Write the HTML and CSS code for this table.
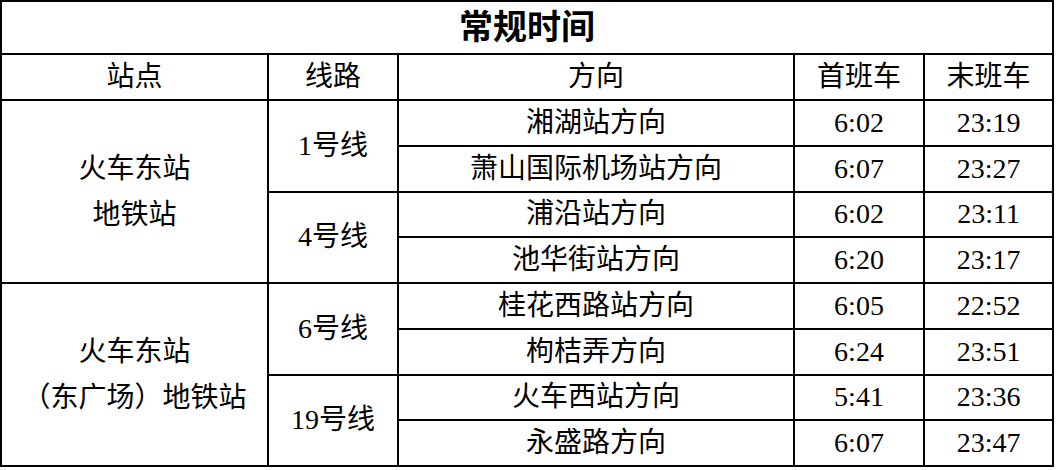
FILE: index.html
```html
<!DOCTYPE html>
<html lang="zh-CN">
<head>
<meta charset="utf-8">
<title>常规时间</title>
<link rel="stylesheet" href="styles.css">
</head>
<body>
<table class="timetable">
  <colgroup>
    <col class="c-station">
    <col class="c-line">
    <col class="c-dir">
    <col class="c-first">
    <col class="c-last">
  </colgroup>
  <tr class="r-title"><th colspan="5" class="title">常规时间</th></tr>
  <tr class="r-head">
    <th>站点</th><th>线路</th><th>方向</th><th>首班车</th><th>末班车</th>
  </tr>
  <tr class="r-data">
    <td rowspan="4" class="station">火车东站<br>地铁站</td>
    <td rowspan="2" class="line">1号线</td>
    <td>湘湖站方向</td><td class="num">6:02</td><td class="num">23:19</td>
  </tr>
  <tr class="r-data"><td>萧山国际机场站方向</td><td class="num">6:07</td><td class="num">23:27</td></tr>
  <tr class="r-data">
    <td rowspan="2" class="line">4号线</td>
    <td>浦沿站方向</td><td class="num">6:02</td><td class="num">23:11</td>
  </tr>
  <tr class="r-data"><td>池华街站方向</td><td class="num">6:20</td><td class="num">23:17</td></tr>
  <tr class="r-data">
    <td rowspan="4" class="station">火车东站<br>（东广场）地铁站</td>
    <td rowspan="2" class="line">6号线</td>
    <td>桂花西路站方向</td><td class="num">6:05</td><td class="num">22:52</td>
  </tr>
  <tr class="r-data"><td>枸桔弄方向</td><td class="num">6:24</td><td class="num">23:51</td></tr>
  <tr class="r-data">
    <td rowspan="2" class="line">19号线</td>
    <td>火车西站方向</td><td class="num">5:41</td><td class="num">23:36</td>
  </tr>
  <tr class="r-data"><td>永盛路方向</td><td class="num">6:07</td><td class="num">23:47</td></tr>
</table>
</body>
</html>
```
FILE: styles.css
```css
html, body {
  margin: 0;
  padding: 0;
  background: #ffffff;
}

body {
  font-family: "Liberation Serif", "Noto Sans CJK SC", serif;
  color: #000000;
}

.timetable {
  border-collapse: collapse;
  table-layout: fixed;
  width: 1054px;
}

.c-station { width: 267px; }
.c-line { width: 130px; }
.c-dir { width: 396px; }
.c-first { width: 130px; }
.c-last { width: 129px; }

.timetable th,
.timetable td {
  border: 2px solid #000000;
  padding: 0;
  text-align: center;
  vertical-align: middle;
  font-size: 28px;
  font-weight: normal;
  line-height: 36px;
  white-space: nowrap;
}

.r-title { height: 53px; }
.r-head { height: 46px; }
.r-data { height: 45.75px; }

.timetable .title {
  font-size: 34px;
  font-weight: bold;
  line-height: 44px;
}

.timetable .station {
  line-height: 46px;
}
```
